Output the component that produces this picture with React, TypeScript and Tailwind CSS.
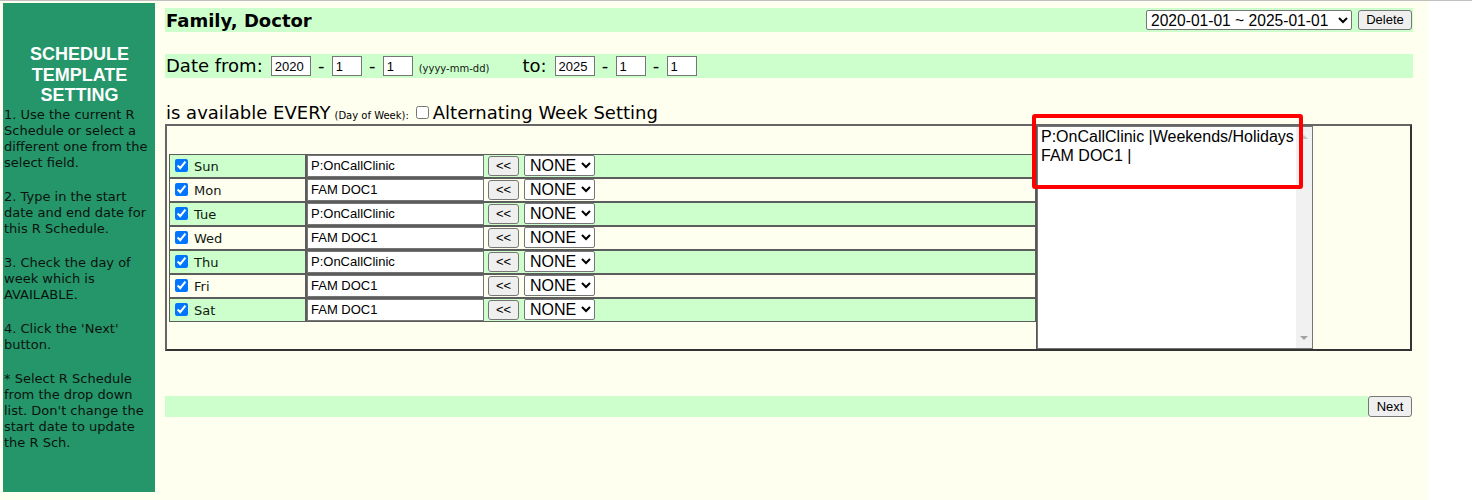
import React from "react";

const days: { d: string; v: string }[] = [
  { d: "Sun", v: "P:OnCallClinic" },
  { d: "Mon", v: "FAM DOC1" },
  { d: "Tue", v: "P:OnCallClinic" },
  { d: "Wed", v: "FAM DOC1" },
  { d: "Thu", v: "P:OnCallClinic" },
  { d: "Fri", v: "FAM DOC1" },
  { d: "Sat", v: "FAM DOC1" },
];

const paragraphs: string[][] = [
  ["1. Use the current R", "Schedule or select a", "different one from the", "select field."],
  ["2. Type in the start", "date and end date for", "this R Schedule."],
  ["3. Check the day of", "week which is", "AVAILABLE."],
  ["4. Click the 'Next'", "button."],
  ["* Select R Schedule", "from the drop down", "list. Don't change the", "start date to update", "the R Sch."],
];

function DateBox({ value, w }: { value: string; w: "w40" | "w30" }) {
  return (
    <input
      readOnly
      value={value}
      className={`${w === "w40" ? "w-[40px]" : "w-[30px]"} h-[20px] border border-[#767676] bg-white pl-[3px] font-['Liberation_Sans',Arial,sans-serif] text-[13px] text-black outline-none`}
    />
  );
}

function Dash() {
  return <span className="w-[21px] text-center font-['DejaVu_Sans',Verdana,sans-serif] text-[18px] leading-[20px]">-</span>;
}

export default function App() {
  return (
    <div className="min-h-[500px] w-[1472px] bg-white">
      <div className="h-[1px] w-full bg-[#c0c0c0]" />
      <div className="flex min-h-[499px] w-[1428px] bg-[#fffff0] pl-[3px] pt-[2px] text-black">
        {/* Sidebar */}
        <div className="h-[489px] w-[152px] bg-[#24966a] pl-[1px] pt-[41px]">
          <div className="text-center font-['Liberation_Sans',Arial,sans-serif] text-[18px] font-bold leading-[20.5px] text-white">
            SCHEDULE
            <br />
            TEMPLATE
            <br />
            SETTING
          </div>
          <div className="mt-[1px] font-['DejaVu_Sans',Verdana,sans-serif] text-[13px] leading-[16px] text-[#0b130e]">
            {paragraphs.map((p, i) => (
              <div key={i} className={i === 0 ? "" : "mt-[18px]"}>
                {p.map((l, j) => (
                  <div key={j} className="whitespace-nowrap">
                    {l}
                  </div>
                ))}
              </div>
            ))}
          </div>
        </div>

        {/* Main */}
        <div className="ml-[10px] mt-[5px] w-[1248px]">
          {/* Header */}
          <div className="flex h-[24px] items-center justify-between bg-[#ccffcc]">
            <span className="pl-[1px] font-['DejaVu_Sans',Verdana,sans-serif] text-[18px] font-bold">Family, Doctor</span>
            <div className="mr-[1px] flex items-center">
              <select
                defaultValue="a"
                className="h-[20px] w-[206px] rounded-[2px] border border-[#767676] bg-white pl-0 font-['Liberation_Sans',Arial,sans-serif] text-[15.6px] leading-[18px] text-black"
              >
                <option value="a">2020-01-01 ~ 2025-01-01</option>
              </select>
              <button className="ml-[6px] h-[20px] w-[54px] rounded-[3px] border border-[#767676] bg-[#efefef] font-['Liberation_Sans',Arial,sans-serif] text-[13px] leading-[18px] text-black">
                Delete
              </button>
            </div>
          </div>

          {/* Date row */}
          <div className="mt-[22px] flex h-[24px] items-center bg-[#ccffcc]">
            <span className="pl-[1px] font-['DejaVu_Sans',Verdana,sans-serif] text-[18px] leading-[20px]">Date from:</span>
            <span className="ml-[8px] flex items-center">
              <DateBox value="2020" w="w40" />
              <Dash />
              <DateBox value="1" w="w30" />
              <Dash />
              <DateBox value="1" w="w30" />
            </span>
            <span className="ml-[6px] mt-[4px] font-['DejaVu_Sans',Verdana,sans-serif] text-[10px] text-[#102010]">(yyyy-mm-dd)</span>
            <span className="ml-[33px] font-['DejaVu_Sans',Verdana,sans-serif] text-[18px] leading-[20px]">to:</span>
            <span className="ml-[8px] flex items-center">
              <DateBox value="2025" w="w40" />
              <Dash />
              <DateBox value="1" w="w30" />
              <Dash />
              <DateBox value="1" w="w30" />
            </span>
          </div>

          {/* Available line */}
          <div className="mt-[24px] flex h-[22px] items-baseline pl-[1px] font-['DejaVu_Sans',Verdana,sans-serif] text-[18px] leading-[21px]">
            <span>is available EVERY</span>
            <span className="ml-[4px] text-[10px]">(Day of Week):</span>
            <input type="checkbox" className="ml-[7px] h-[13px] w-[13px]" />
            <span className="ml-[4px]">Alternating Week Setting</span>
          </div>

          {/* Table */}
          <div className="relative flex h-[227px] w-[1247px] border-2 border-[#666666] border-b-[#333333] border-r-[#333333]">
            <div className="flex h-full w-[870px] items-center border-r border-[#555555] pl-[2px]">
              <div className="w-[867px]">
                {days.map((r, i) => (
                  <div key={r.d} className={`flex h-[24px] ${i % 2 === 0 ? "bg-[#ccffcc]" : "bg-[#fffff0]"}`}>
                    <div className="flex w-[137px] items-center border border-[#5c5c5c]">
                      <input type="checkbox" defaultChecked className="ml-[5px] h-[13px] w-[13px] accent-[#0075ff]" />
                      <span className="ml-[6px] mt-[2px] font-['DejaVu_Sans',Verdana,sans-serif] text-[13px] text-[#101810]">{r.d}</span>
                    </div>
                    <div className="flex w-[730px] items-center border border-[#5c5c5c]">
                      <input
                        readOnly
                        value={r.v}
                        className="h-[22px] w-[177px] border border-[#767676] bg-white pl-[3px] font-['Liberation_Sans',Arial,sans-serif] text-[13px] text-black outline-none"
                      />
                      <button className="ml-[4px] h-[20px] w-[31px] rounded-[3px] border border-[#767676] bg-[#efefef] font-['Liberation_Sans',Arial,sans-serif] text-[13px] leading-[18px] text-black">
                        &lt;&lt;
                      </button>
                      <select
                        defaultValue="n"
                        className="ml-[5px] h-[21px] w-[71px] rounded-[2px] border border-[#767676] bg-white pl-[1px] font-['Liberation_Sans',Arial,sans-serif] text-[16px] leading-[18px] text-black"
                      >
                        <option value="n">NONE</option>
                      </select>
                    </div>
                  </div>
                ))}
              </div>
            </div>
            <div className="relative h-full w-[276px] border border-[#767676] bg-white">
              <div className="pl-[3px] font-['Liberation_Sans',Arial,sans-serif] text-[16px] leading-[19px] text-black">
                <div className="whitespace-nowrap">P:OnCallClinic |Weekends/Holidays</div>
                <div className="whitespace-nowrap">FAM DOC1 |</div>
              </div>
              <div className="absolute bottom-0 right-0 top-0 flex w-[16px] flex-col items-center justify-between bg-[#f1f1f1] py-[7px]">
                <svg width="8" height="5" viewBox="0 0 8 5">
                  <path d="M0 5 L4 1 L8 5 Z" fill="#c4c4c4" />
                </svg>
                <svg width="8" height="5" viewBox="0 0 8 5">
                  <path d="M0 0 L8 0 L4 4 Z" fill="#a3a3a3" />
                </svg>
              </div>
            </div>
            <div className="flex-1" />
            <div className="pointer-events-none absolute left-[865px] top-[-12px] h-[75px] w-[271px] rounded-[3px] border-4 border-[#ff0000]" />
          </div>

          {/* Bottom */}
          <div className="mt-[45px] flex h-[21px]">
            <div className="flex-1 bg-[#ccffcc]" />
            <button className="mr-[1px] h-[21px] w-[44px] rounded-[3px] border border-[#767676] bg-[#efefef] font-['Liberation_Sans',Arial,sans-serif] text-[13px] leading-[18px] text-black">
              Next
            </button>
          </div>
        </div>
      </div>
    </div>
  );
}
